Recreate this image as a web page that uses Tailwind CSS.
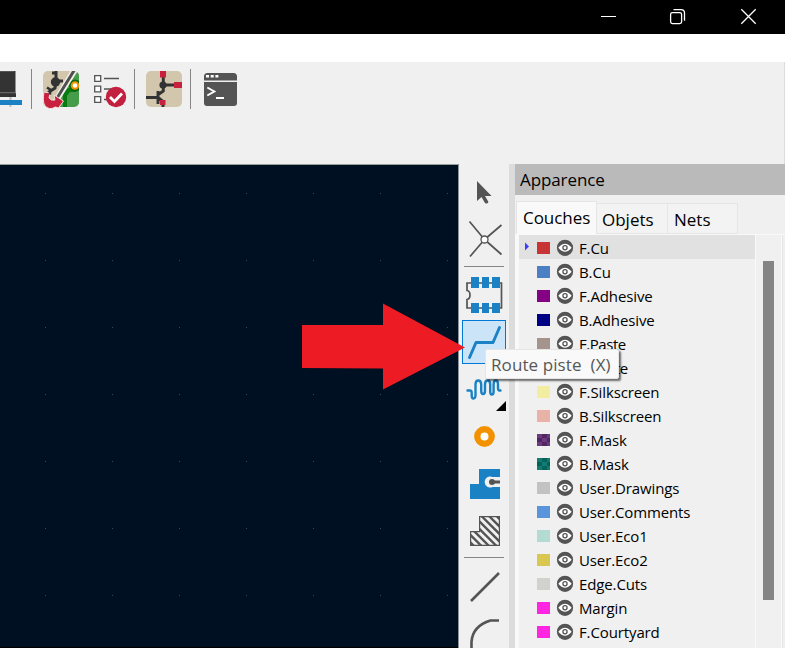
<!DOCTYPE html>
<html lang="fr">
<head>
<meta charset="utf-8">
<title>Éditeur de PCB</title>
<script src="https://cdn.jsdelivr.net/npm/@tailwindcss/browser@4"></script>
</head>
<body class="relative flex h-[648px] w-[785px] flex-col overflow-hidden bg-[#f0f0f0] font-['Open_Sans','Noto_Sans',sans-serif] text-black">
<header class="flex h-[34px] shrink-0 items-start justify-end bg-black">
  <svg class="h-[34px] w-[70px]" viewBox="573 0 70 34" fill="none" stroke="#fff"><path d="M601 16.5h15"/></svg>
  <svg class="h-[34px] w-[70px]" viewBox="643 0 70 34" fill="none" stroke="#fff" stroke-width="1.3"><rect x="670.6" y="12.6" width="11" height="11" rx="1.8"/><path d="M673.5 9.7h7.5q3.5 0 3.5 3.5v7.5"/></svg>
  <svg class="h-[34px] w-[72px]" viewBox="713 0 72 34" fill="none" stroke="#fff" stroke-width="1.3"><path d="M741.3 9.3l14.4 14.4M755.7 9.3l-14.4 14.4"/></svg>
</header>
<div class="h-7 shrink-0 bg-white"></div>
<div class="flex h-[102px] shrink-0 border-r border-[#dcdcdc] bg-[#f0f0f0]">
  <svg class="h-14 w-[250px]" viewBox="0 62 250 56">
    <path d="M0 71h15.500v24H0z" fill="#333"/><path d="M0 71h14v1H0z" fill="#555"/><path d="M0 92h15.500v1.500H0z" fill="#666"/><path d="M0 93.500h16V97H0z" fill="#333"/><path d="M10.500 97v10" stroke="#bbb" stroke-width="2"/><path d="M0 100h22v5H0z" fill="#1a81c4"/>
    <path d="M31.500 69v40M134.500 69v40M190.500 69v40" stroke="#858585"/>
    <clipPath id="tile"><rect x="43" y="71" width="36" height="36" rx="5"/></clipPath>
    <g clip-path="url(#tile)">
      <path d="M43 71h36v36H43z" fill="#d2c6ac"/><path d="M78 71h2v36H54z" fill="#459c49"/>
      <path d="M76 90h-7l-4 5v12" fill="none" stroke="#087a10" stroke-width="4"/>
      <circle cx="75" cy="85.500" r="6" fill="#08680d"/><circle cx="75" cy="85.500" r="3.300" fill="#fff" stroke="#f59300" stroke-width="1.900"/>
      <path d="M56 71v11l-1 6-6 4v3" fill="none" stroke="#333" stroke-width="3"/><circle cx="55.500" cy="82" r="4.700" fill="#333"/><path d="M55 81h8M52 73h5" stroke="#333" stroke-width="3"/>
      <path d="M75 69L54 104" stroke="#f3f2ee" stroke-width="6"/><path d="M75 69L54 103" stroke="#505050" stroke-width="3"/>
    </g>
    <path d="M44 92l6 1-1 5q2 3 6 2l-1-5 9.500 6-5 7-3-1q-7 4-11-2-2-4-.5-13z" fill="#c9203f" stroke="#eee4d8" stroke-width="1"/>
    <path d="M47 87.500l3 2v5" fill="none" stroke="#333" stroke-width="2.500"/>
    <g fill="#fff" stroke="#545454" stroke-width="1.300"><path d="M94.700 75.700h6v5.600h-6zM94.700 86.200h6v5.600h-6zM94.700 96.700h6v5.600h-6z"/></g>
    <path d="M104 78.500h15M104 89h12M104 99.500h5" stroke="#545454" stroke-width="1.300"/>
    <circle cx="116" cy="97" r="10.200" fill="#c31f3e"/><path d="M110 97l4.500 4.500 7.500-8" fill="none" stroke="#fff" stroke-width="2.800"/>
    <rect x="146" y="71" width="36" height="36" rx="5" fill="#d2c6ac"/>
    <path d="M163.300 77v14l-5 3.500M163 85h13M146 97.500h12M158 91v13M158 97.500l5 4v5.500" fill="none" stroke="#333" stroke-width="2.900"/><circle cx="163" cy="85" r="3.600" fill="#333"/>
    <path d="M160 71h6v6.500h-6zM174 82h8v6h-8zM160 100h5.500v5H160z" fill="#c9203f"/>
    <path d="M207.500 73h26a3.500 3.500 0 013.500 3.500V80.500h-33V76.500a3.500 3.500 0 013.500-3.500zM204 82h33v21a3 3 0 01-3 3h-27a3 3 0 01-3-3z" fill="#545454"/>
    <path d="M206 75h3v2.500h-3zM210.700 75h3v2.500h-3zM215.400 75h3v2.500h-3z" fill="#fff"/><path d="M207.300 87.500l7 4-7 4M216 98h8" fill="none" stroke="#fff" stroke-width="2"/>
  </svg>
</div>
<main class="flex h-[422px] grow">
  <svg class="h-full w-[459px]" viewBox="0 164 459 484" shape-rendering="crispEdges">
    <defs><pattern id="grid" x="45" y="193" width="67" height="67" patternUnits="userSpaceOnUse"><path d="M0 0h1v1H0z" fill="#3d4955"/></pattern></defs>
    <path d="M0 164h459v484H0z" fill="#001023"/><path d="M0 165h458v482H0z" fill="url(#grid)"/><path d="M0 647h458v1H0z" fill="#000"/><path d="M0 164h459v1H0z" fill="#96a09b"/><path d="M458 164h1v484h-1z" fill="#8d9399"/>
  </svg>
  <aside class="flex w-[50px] shrink-0 flex-col">
    <svg class="h-[52px] w-[50px]" viewBox="459 164 50 52"><path d="M477 181v20l4.500-4 3.500 6q2 1.500 3.500-1l-3.500-6h6.500z" fill="#545454"/></svg>
    <svg class="h-[50px] w-[50px]" viewBox="459 216 50 50"><path d="M469.500 221.500l15 18M501.500 225l-17 14.500M484.500 239.500l-14.500 17M484.500 239.500l17 15" stroke="#545454" stroke-width="1.700"/><circle cx="484.500" cy="239.500" r="3.500" fill="#fff" stroke="#545454" stroke-width="1.300"/></svg>
    <div class="mx-[5px] h-px bg-[#858585]"></div>
    <svg class="h-[53px] w-[50px]" viewBox="459 267 50 53"><path d="M501.500 283h-34.500v7.500q3 .5 3 4.500t-3 4.500v8.500h34.500z" fill="none" stroke="#545454" stroke-width="1.700"/><path d="M471 277h8v11h-8zM482 277h7v11h-7zM492 277h8v11h-8zM471 303h8v10h-8zM482 303h7v10h-7zM492 303h8v10h-8z" fill="#1a81c4"/></svg>
    <div class="ml-[3px] size-11 border border-[#0078d7] bg-[#cce4f7]"><svg class="size-full" viewBox="463 321 42 42"><path d="M469.500 357.500l6.500-15h17l6.500-15" fill="none" stroke="#1a81c4" stroke-width="2.900" stroke-linecap="round" stroke-linejoin="round"/></svg></div>
    <svg class="h-[50px] w-[50px]" viewBox="459 364 50 50"><path d="M467.500 390.500h2.500q1.700 0 1.700 2.500v2.500q0 3 1.800 3t2-3v-11q0-4 2.800-4t2.900 4v6q0 3.500 1.900 3.500t1.900-3.500v-6q0-4 2.600-4t2.600 4v7q0 3 1.700 3t1.700-3v-7q0-4 2.200-4t2.200 4v3.500q0 2.500 1.500 2.500h1" fill="none" stroke="#1a81c4" stroke-width="2.400" stroke-linecap="round"/><path d="M506 401v10h-10z" fill="#000"/></svg>
    <svg class="h-[46px] w-[50px]" viewBox="459 414 50 46"><circle cx="484.500" cy="436.500" r="7.200" fill="#fff" stroke="#f39200" stroke-width="6.400"/></svg>
    <svg class="h-[48px] w-[50px]" viewBox="459 460 50 48"><path d="M479 469h21v30h-30v-15h9z" fill="#1a81c4"/><path d="M500 477h-7.500a5.500 5.500 0 100 10h7.500z" fill="#f0f0f0"/><circle cx="492" cy="482" r="3" fill="#545454"/><path d="M492 482h8" stroke="#545454" stroke-width="3"/></svg>
    <svg class="h-[49px] w-[50px]" viewBox="459 508 50 49"><clipPath id="zone"><path d="M479 516h21v30h-30v-15h9z"/></clipPath><path clip-path="url(#zone)" d="M436 508l40 40M443.500 508l40 40M451 508l40 40M458.500 508l40 40M466 508l40 40M473.500 508l40 40M481 508l40 40M488.500 508l40 40" stroke="#545454" stroke-width="2.300"/><path d="M479.600 516.600h19.800v28.800h-28.800v-13.800h9z" fill="none" stroke="#545454" stroke-width="1.200"/></svg>
    <div class="mx-[5px] h-px shrink-0 bg-[#858585]"></div>
    <svg class="h-[90px] w-[50px] shrink-0" viewBox="459 558 50 90"><path d="M471 601l28-28M471.500 649v-7q1-16 19-21.500h8.500" fill="none" stroke="#545454" stroke-width="2.600"/></svg>
  </aside>
  <div class="w-1.5 shrink-0 bg-[#dcdcdc]"></div>
  <section class="flex w-[270px] shrink-0 flex-col">
    <h1 class="h-[31px] shrink-0 bg-[#bababa] pl-[5px] text-[17px] leading-[32px] tracking-[-0.1px]">Apparence</h1>
    <div class="mt-[6px] flex h-[33px] shrink-0 items-end pl-px text-[17px]">
      <div class="h-[33px] w-[81px] border border-b-0 border-[#e5e5e5] bg-[#f9f9f9] pl-1.5 leading-[31px] tracking-[-0.05px]">Couches</div>
      <div class="h-[31px] w-[71px] border border-l-0 border-[#e5e5e5] bg-[#f3f3f3] pl-[5px] leading-[31px]">Objets</div>
      <div class="h-[31px] w-[70px] border border-l-0 border-[#e5e5e5] bg-[#f3f3f3] pl-1.5 leading-[31px]">Nets</div>
    </div>
    <div class="flex min-h-0 grow bg-[#f9f9f9] pl-1 pt-px">
      <ul id="layers" class="w-[236px] bg-[#f0f0f0] text-[15px]"></ul>
      <div class="ml-px w-[25px] bg-[#f0f0f0] pl-[7px] pt-[26px]"><div class="h-[339px] w-[11px] bg-[#858585]"></div></div>
      <div class="ml-px w-px bg-[#e5e5e5]"></div>
      <div class="grow bg-[#f0f0f0]"></div>
    </div>
  </section>
</main>
<svg class="absolute left-[302px] top-[303px] h-[87px] w-[163px]" viewBox="302 303 163 87"><path d="M302 325h81v-21.500l82 44-82 42v-21l-81-.5z" fill="#ed1c24"/></svg>
<div class="absolute left-[485px] top-[349px] h-[30px] w-[134px] whitespace-pre rounded-[2px] border border-[#e5e5e5] bg-[#f9f9f9] pl-[5px] text-[17px] leading-[30px] tracking-[0.09px] text-[#575757] shadow-[2px_2px_2px_rgba(0,0,0,0.55)]">Route piste  (X)</div>
<script>
const layers = [["F.Cu","#c83434"],["B.Cu","#4d7fc4"],["F.Adhesive","#840084"],["B.Adhesive","#000084"],["F.Paste","#a5948c"],["B.Paste","#00c2c2"],["F.Silkscreen","#f2eda1"],["B.Silkscreen","#e8b2a7"],["F.Mask","#6b3a7b","#512463"],["B.Mask","#147b73","#02625c"],["User.Drawings","#c2c2c2"],["User.Comments","#5994dc"],["User.Eco1","#b4dbd2"],["User.Eco2","#d8c852"],["Edge.Cuts","#d0d2cd"],["Margin","#ff26e2"],["F.Courtyard","#ff26e2"]];
document.getElementById("layers").innerHTML = layers.map(([name, c, d], i) => `
<li class="flex h-6 items-center ${i ? "" : "bg-[#e1e1e1]"}">
<svg class="h-6 w-[56px] shrink-0" viewBox="0 0 56 24">${i ? "" : '<path d="M6 7.500l4 4-4 4z" fill="#3c3cff"/>'}
<path d="M18 7h13v12H18z" fill="${c}"/>${d ? `<path d="M23 7h5v4h-5zM18 11h5v4h-5zM28 11h3v4h-3zM23 15h5v4h-5z" fill="${d}"/>` : ""}
<circle cx="46" cy="12.800" r="8.100" fill="#545454"/><path d="M39.300 12.800q6.700-8 13.400 0-6.700 8-13.400 0z" fill="#fff"/><circle cx="46" cy="12.800" r="2.100" fill="#fff" stroke="#545454" stroke-width="1.300"/></svg>
<span class="relative top-px ml-1 leading-6 ${name.includes("Paste") ? "tracking-[-0.45px]" : "tracking-[-0.12px]"}">${name}</span></li>`).join("");
</script>
</body>
</html>
